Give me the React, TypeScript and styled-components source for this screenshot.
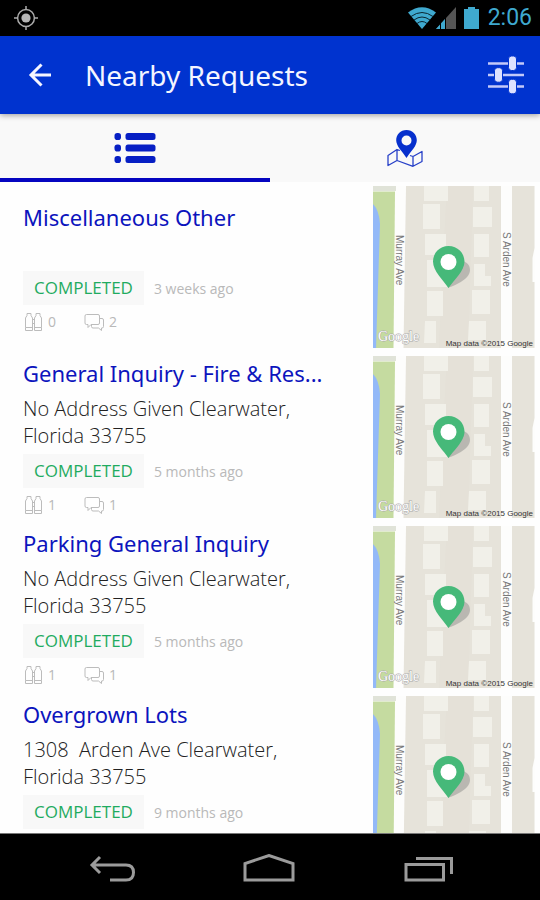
import React from "react";
import styled, { createGlobalStyle } from "styled-components";

const GlobalStyle = createGlobalStyle`
  * { box-sizing: border-box; }
  body { margin: 0; background: #fff; font-family: "Open Sans", "Noto Sans", sans-serif; }
  button { border: 0; padding: 0; background: none; font: inherit; color: inherit; cursor: pointer; }
  h1, h2, p, ul { margin: 0; padding: 0; font-weight: 400; }
  svg { display: block; flex: none; }
`;

const Screen = styled.div`
  display: flex;
  flex-direction: column;
  height: 100vh;
`;

const StatusBar = styled.div`
  flex: none;
  display: flex;
  align-items: center;
  justify-content: space-between;
  height: 36px;
  padding: 0 8px 0 14px;
  background: #000;
`;

const StatusIcons = styled.div`
  display: flex;
  align-items: center;
`;

const Clock = styled.time`
  margin-left: 8px;
  font-family: Roboto, sans-serif;
  font-size: 23px;
  line-height: 36px;
  color: #3fa9cf;
`;

const Header = styled.header`
  flex: none;
  display: flex;
  align-items: center;
  height: 78px;
  padding: 0 16px 0 24px;
  background: #0033cf;
  color: #f4f5ff;
  box-shadow: 0 1px 6px rgba(0, 0, 0, 0.4);
  z-index: 1;
`;

const HeaderButton = styled.button`
  display: flex;
  align-items: center;
  height: 48px;
`;

const PageTitle = styled.h1`
  flex: 1;
  margin-left: 29px;
  font-family: "Noto Sans", sans-serif;
  font-size: 28px;
  line-height: 36px;
`;

const Tabs = styled.div`
  flex: none;
  display: grid;
  grid-template-columns: 1fr 1fr;
  height: 68px;
  background: #f9f9f9;
`;

const Tab = styled.button<{ $active?: boolean }>`
  display: flex;
  align-items: center;
  justify-content: center;
  padding-top: 3px;
  border-bottom: 4px solid ${(p) => (p.$active ? "#0505c0" : "transparent")};
`;

const List = styled.ul`
  flex: 1;
  min-height: 0;
  overflow-y: auto;
  scrollbar-width: none;
  list-style: none;
  background: #fefefe;
`;

const Row = styled.li`
  display: flex;
  align-items: center;
  height: 170px;
  padding: 4px 5px 4px 23px;
`;

const Details = styled.div`
  flex: 1;
  min-width: 0;
  padding-bottom: 1px;
`;

const RequestTitle = styled.h2`
  margin-bottom: 6px;
  font-family: "Noto Sans", sans-serif;
  font-size: 22px;
  line-height: 32px;
  color: #0c14bd;
  white-space: nowrap;
  overflow: hidden;
  text-overflow: ellipsis;
`;

const Address = styled.p`
  min-height: 27px;
  margin-bottom: 5px;
  font-size: 20px;
  font-weight: 300;
  line-height: 27px;
  color: #222;
  white-space: pre-line;
`;

const StatusLine = styled.div`
  display: flex;
  align-items: center;
  gap: 10px;
`;

const Badge = styled.span`
  padding: 0 11px;
  background: #f8f8f8;
  font-size: 17px;
  line-height: 34px;
  color: #1fab60;
`;

const Age = styled.span`
  padding-top: 2px;
  font-size: 14px;
  line-height: 20px;
  color: #b9b9b9;
`;

const Counts = styled.div`
  display: flex;
  gap: 28px;
  margin-top: 6px;
`;

const Count = styled.span`
  display: flex;
  align-items: center;
  gap: 4px;
  font-size: 14px;
  line-height: 22px;
  color: #b9b9b9;
`;

const NavBar = styled.nav`
  flex: none;
  display: flex;
  align-items: center;
  justify-content: center;
  gap: 108px;
  height: 67px;
  padding-top: 2px;
  border-top: 1px solid #777;
  background: #000;
  color: #9b9b9b;
`;

const LocationIcon = () => (
  <svg width="24" height="24" viewBox="0 0 24 24" fill="none" stroke="#aaa" strokeWidth="1.5">
    <circle cx="12" cy="12" r="8.4" />
    <circle cx="12" cy="12" r="4.6" fill="#b5b5b5" stroke="none" />
    <path d="M12 0v4M12 20v4M0 12h4M20 12h4" />
  </svg>
);

const WifiIcon = () => (
  <svg width="28" height="22" viewBox="0 0 28 22">
    <path d="M0 5.5Q14-5 28 5.5L14 22Z" fill="#3fa9cf" />
    <g fill="none" stroke="#0b2530" strokeWidth="1">
      <path d="M3 9.5Q14 1.5 25 9.5" />
      <path d="M6 13Q14 7 22 13" />
      <path d="M9 16.5Q14 12.5 19 16.5" />
    </g>
  </svg>
);

const SignalIcon = () => (
  <svg width="20" height="22" viewBox="0 0 20 22">
    <path d="M0 22 20 0V22Z" fill="#555" />
    <path d="M0 22 9 12V22Z" fill="#3fa9cf" />
    <path d="M4.5 16V22M9.5 10V22" stroke="#000" strokeWidth="1" />
  </svg>
);

const BatteryIcon = () => (
  <svg width="24" height="24" viewBox="0 0 24 24">
    <path d="M12 1h7v2h4v20H8V3h4Z" fill="#3fa9cf" />
  </svg>
);

const BackArrow = () => (
  <svg width="32" height="28" viewBox="0 0 32 28" fill="none" stroke="currentColor" strokeWidth="3">
    <path d="M27 14H7M17.5 3.5 7 14l10.500 10.500" />
  </svg>
);

const SlidersIcon = () => (
  <svg width="36" height="38" viewBox="0 0 36 38">
    <path d="M0 7.500H36M0 19H36M0 30.500H36" stroke="#c3c9f9" strokeWidth="2.500" />
    <g fill="#dde1ff" stroke="#0033cf">
      <rect x="20.500" y="0" width="8" height="14.500" rx="3" />
      <rect x="6.500" y="11.700" width="8" height="14.500" rx="3" />
      <rect x="20.500" y="23.300" width="8" height="14.500" rx="3" />
    </g>
  </svg>
);

const ListIcon = () => (
  <svg width="42" height="32" viewBox="0 0 42 32" fill="#071fc4">
    {[1, 12.5, 24].map((y) => (
      <g key={y}>
        <rect x="0.500" y={y} width="6.500" height="7" rx="2.800" />
        <rect x="11.500" y={y} width="30" height="7" rx="2.500" />
      </g>
    ))}
  </svg>
);

const MapPinIcon = () => (
  <svg width="36" height="38" viewBox="0 0 36 38" fill="none" stroke="#2740c8" strokeWidth="1.300" strokeLinejoin="round">
    <path d="M13 21.500 10 20.500 1 26.500V36.500L10 31.500 26 37.300 35 32.500V22.500L26 27.500 23 26.500M10 20.500V31.500M26 27.500V37" />
    <path fill="#0730cd" stroke="none" fillRule="evenodd" d="M19.500 1C13.500 1 9.200 5.600 9.200 11.300 9.200 17 14.500 21.500 19.500 29 24.500 21.500 29.800 17 29.800 11.300 29.800 5.600 25.500 1 19.500 1ZM19.500 6.500a5 5 0 1 1 0 10 5 5 0 0 1 0-10Z" />
  </svg>
);

const BinocularsIcon = () => (
  <svg width="21" height="20" viewBox="0 0 21 20" fill="none" stroke="#bcbcbc" strokeWidth="1">
    <path d="M2.500 15.500V6L4 3.500V1.500H8V3.500L9.500 6V18.500H2.500V15.500H9.500" />
    <path d="M18.500 15.500V6L17 3.500V1.500H13V3.500L11.500 6V18.500H18.500V15.500H11.500M9.500 7.500H11.500M9.500 11.500H11.500" />
  </svg>
);

const ChatIcon = () => (
  <svg width="21" height="20" viewBox="0 0 21 20" fill="none" stroke="#bcbcbc" strokeWidth="1" strokeLinejoin="round">
    <path d="M2.500 2.500H14Q15.500 2.500 15.500 4V11Q15.500 12.500 14 12.500H7L4 15.500V12.500H2.500Q1 12.500 1 11V4Q1 2.500 2.500 2.500Z" />
    <path d="M15.500 6.500H18Q19.500 6.500 19.500 8V14.500Q19.500 16 18 16H17.500V18.500L14.500 16H9Q7.500 16 7.500 14.500V12.500" />
  </svg>
);

const MapThumb = () => (
  <svg width="162" height="162" viewBox="0 0 162 162" role="img" aria-label="Map of Murray Ave and S Arden Ave">
    <rect width="162" height="162" fill="#fdfdfc" />
    <path d="M0 0H23V5H0Z" fill="#e0e3d8" />
    <path d="M0 5.500H22L20.500 162H0Z" fill="#c5dba0" />
    <path d="M0 18Q6 24 7 38L3 162H0Z" fill="#93b9f8" />
    <path d="M33 0H128V162H30.500Z" fill="#e6e3da" />
    <path d="M139 0H161.500V62L159.500 72V96H161.500V162H139Z" fill="#e6e3da" />
    <path d="M74 0H100L95 162H66Z" fill="#e3dfd6" opacity=".5" />
    <g fill="#f1f0e9">
      <path d="M51 0H75V15H51ZM50 18H67V43H50ZM52 48H73V69H52ZM54 74H74V101H54ZM54 105H70V130H54ZM52 135H63V157H51Z" />
      <path d="M101 0H116V15H101ZM100 21H119V41H100ZM101 48H116V71H101ZM101 78H112V90H118V100H101ZM99 104H117V128H99ZM96 135H113V154H95Z" />
    </g>
    <g fontFamily="Liberation Sans, sans-serif" fontSize="10" fill="#777">
      <text transform="translate(23 49) rotate(90)">Murray Ave</text>
      <text transform="translate(130 46) rotate(90)">S Arden Ave</text>
    </g>
    <path d="M75 102C80 100 97 94 97 84 97 76 88 72 80 78Z" fill="#777" opacity=".4" />
    <path fill="#46b979" fillRule="evenodd" d="M75.500 60C66.500 60 60 67 60 75.500 60 85 70 94 75.500 102 81 94 91.500 85 91.500 75.500 91.500 67 84.500 60 75.500 60Z" />
    <circle cx="75.500" cy="76" r="8" fill="#fff" />
    <text x="5" y="155" fontFamily="Liberation Serif, serif" fontSize="14" fill="#fff" stroke="#aaa" strokeWidth="1" paintOrder="stroke">Google</text>
    <text x="160" y="160" textAnchor="end" fontFamily="Liberation Sans, sans-serif" fontSize="8" fill="#333">Map data ©2015 Google</text>
  </svg>
);

const NavBack = () => (
  <svg width="48" height="28" viewBox="0 0 48 28" fill="none" stroke="currentColor" strokeWidth="3">
    <path d="M13 3 5 11 13 19M5 11H39C44 11 46.500 14 46.500 18.500S44 26 39 26H23" />
  </svg>
);

const NavHome = () => (
  <svg width="52" height="28" viewBox="0 0 52 28" fill="none" stroke="currentColor" strokeWidth="3">
    <path d="M2 26V9.500L26 1.500 50 9.500V26Z" />
  </svg>
);

const NavRecents = () => (
  <svg width="50" height="28" viewBox="0 0 50 28" fill="none" stroke="currentColor" strokeWidth="3">
    <path d="M3 10.500H40.500V26H3ZM13 4.500H48.500V20" />
  </svg>
);

const requests = [
  { title: "Miscellaneous Other", address: "", age: "3 weeks ago", watchers: 0, comments: 2 },
  { title: "General Inquiry - Fire & Res...", address: "No Address Given Clearwater,\nFlorida 33755", age: "5 months ago", watchers: 1, comments: 1 },
  { title: "Parking General Inquiry", address: "No Address Given Clearwater,\nFlorida 33755", age: "5 months ago", watchers: 1, comments: 1 },
  { title: "Overgrown Lots", address: "1308 \u00a0Arden Ave Clearwater,\nFlorida 33755", age: "9 months ago" },
];

export default function App() {
  return (
    <Screen>
      <GlobalStyle />
      <StatusBar>
        <LocationIcon />
        <StatusIcons>
          <WifiIcon />
          <SignalIcon />
          <BatteryIcon />
          <Clock>2:06</Clock>
        </StatusIcons>
      </StatusBar>
      <Header>
        <HeaderButton aria-label="Back"><BackArrow /></HeaderButton>
        <PageTitle>Nearby Requests</PageTitle>
        <HeaderButton aria-label="Filter"><SlidersIcon /></HeaderButton>
      </Header>
      <Tabs role="tablist">
        <Tab $active role="tab" aria-selected="true" aria-label="List"><ListIcon /></Tab>
        <Tab role="tab" aria-selected="false" aria-label="Map"><MapPinIcon /></Tab>
      </Tabs>
      <List>
        {requests.map((r) => (
          <Row key={r.title}>
            <Details>
              <RequestTitle>{r.title}</RequestTitle>
              <Address>{r.address}</Address>
              <StatusLine>
                <Badge>COMPLETED</Badge>
                <Age>{r.age}</Age>
              </StatusLine>
              <Counts>
                <Count><BinocularsIcon />{r.watchers}</Count>
                <Count><ChatIcon />{r.comments}</Count>
              </Counts>
            </Details>
            <MapThumb />
          </Row>
        ))}
      </List>
      <NavBar>
        <button aria-label="Back"><NavBack /></button>
        <button aria-label="Home"><NavHome /></button>
        <button aria-label="Recent apps"><NavRecents /></button>
      </NavBar>
    </Screen>
  );
}
